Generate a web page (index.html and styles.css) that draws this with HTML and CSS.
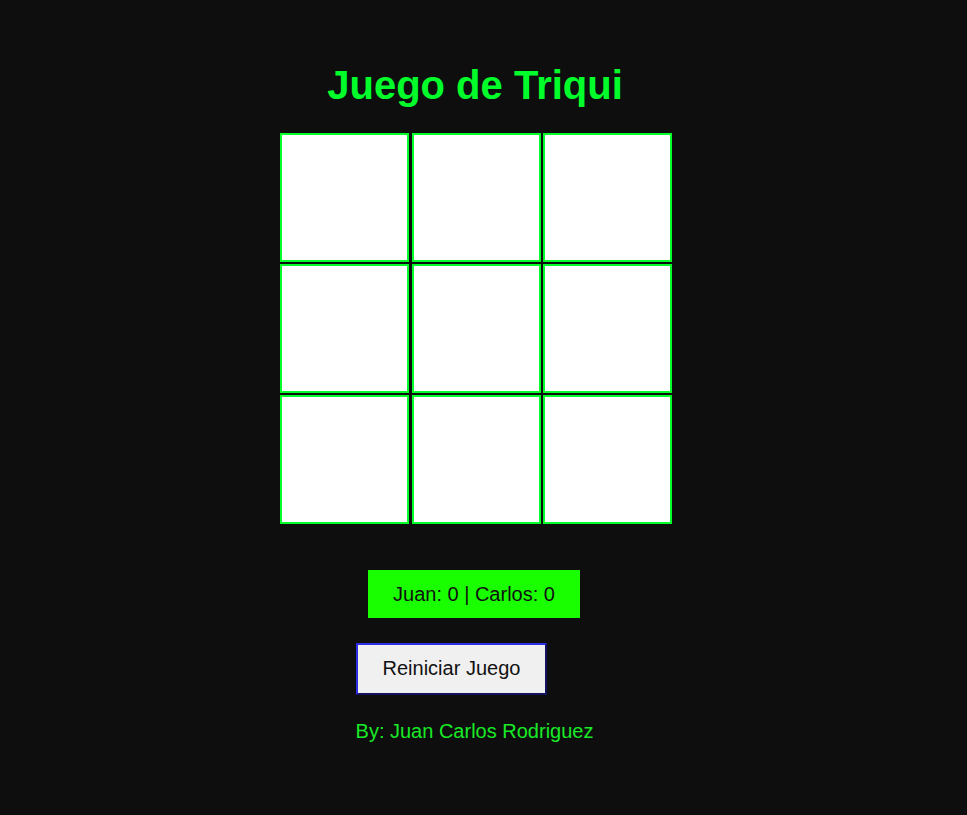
FILE: index.html
```html
<!DOCTYPE html>
<html lang="es">
<head>
<meta charset="utf-8">
<title>Juego de Triqui</title>
<link rel="stylesheet" href="styles.css">
</head>
<body>
<main class="page">
  <h1 class="title">Juego de Triqui</h1>
  <div class="board">
    <div class="cell"></div>
    <div class="cell"></div>
    <div class="cell"></div>
    <div class="cell"></div>
    <div class="cell"></div>
    <div class="cell"></div>
    <div class="cell"></div>
    <div class="cell"></div>
    <div class="cell"></div>
  </div>
  <div class="score">Juan: 0 | Carlos: 0</div>
  <div class="footer-block">
    <button class="reset" type="button">Reiniciar Juego</button>
    <p class="credit">By: Juan Carlos Rodriguez</p>
  </div>
</main>
</body>
</html>
```

FILE: styles.css
```css
html, body {
  margin: 0;
  padding: 0;
  background: #0e0e0e;
  min-height: 100%;
}

body {
  font-family: "Liberation Sans", Arial, sans-serif;
}

.page {
  display: flex;
  flex-direction: column;
  align-items: center;
  padding: 62px 17px 0 0;
}

.title {
  margin: 0;
  font-size: 40px;
  line-height: 46px;
  font-weight: bold;
  color: #00ff2a;
}

.board {
  margin-top: 25px;
  display: grid;
  grid-template-columns: repeat(3, 129px);
  grid-template-rows: repeat(3, 129px);
  column-gap: 2.5px;
  row-gap: 2px;
  margin-left: 2px;
}

.cell {
  box-sizing: border-box;
  background: #ffffff;
  border: 2px solid #00ff2a;
}

.score {
  margin-top: 46px;
  background: #1aff00;
  color: #111111;
  font-size: 20px;
  line-height: 24px;
  padding: 12px 25px;
  margin-right: 2px;
}

.footer-block {
  margin-top: 25px;
  display: flex;
  flex-direction: column;
  align-items: flex-start;
  margin-right: 1px;
}

.reset {
  font-family: "Liberation Sans", Arial, sans-serif;
  font-size: 20px;
  line-height: 23px;
  padding: 12px 25px 13px 25px;
  background: #f0f0f0;
  color: #111111;
  border-style: solid;
  border-width: 2px;
  border-color: #2e2ee6 #12125e #12125e #2e2ee6;
  cursor: pointer;
}

.credit {
  margin: 25px 0 0 0;
  font-size: 20px;
  line-height: 23px;
  color: #19ea26;
}
```
